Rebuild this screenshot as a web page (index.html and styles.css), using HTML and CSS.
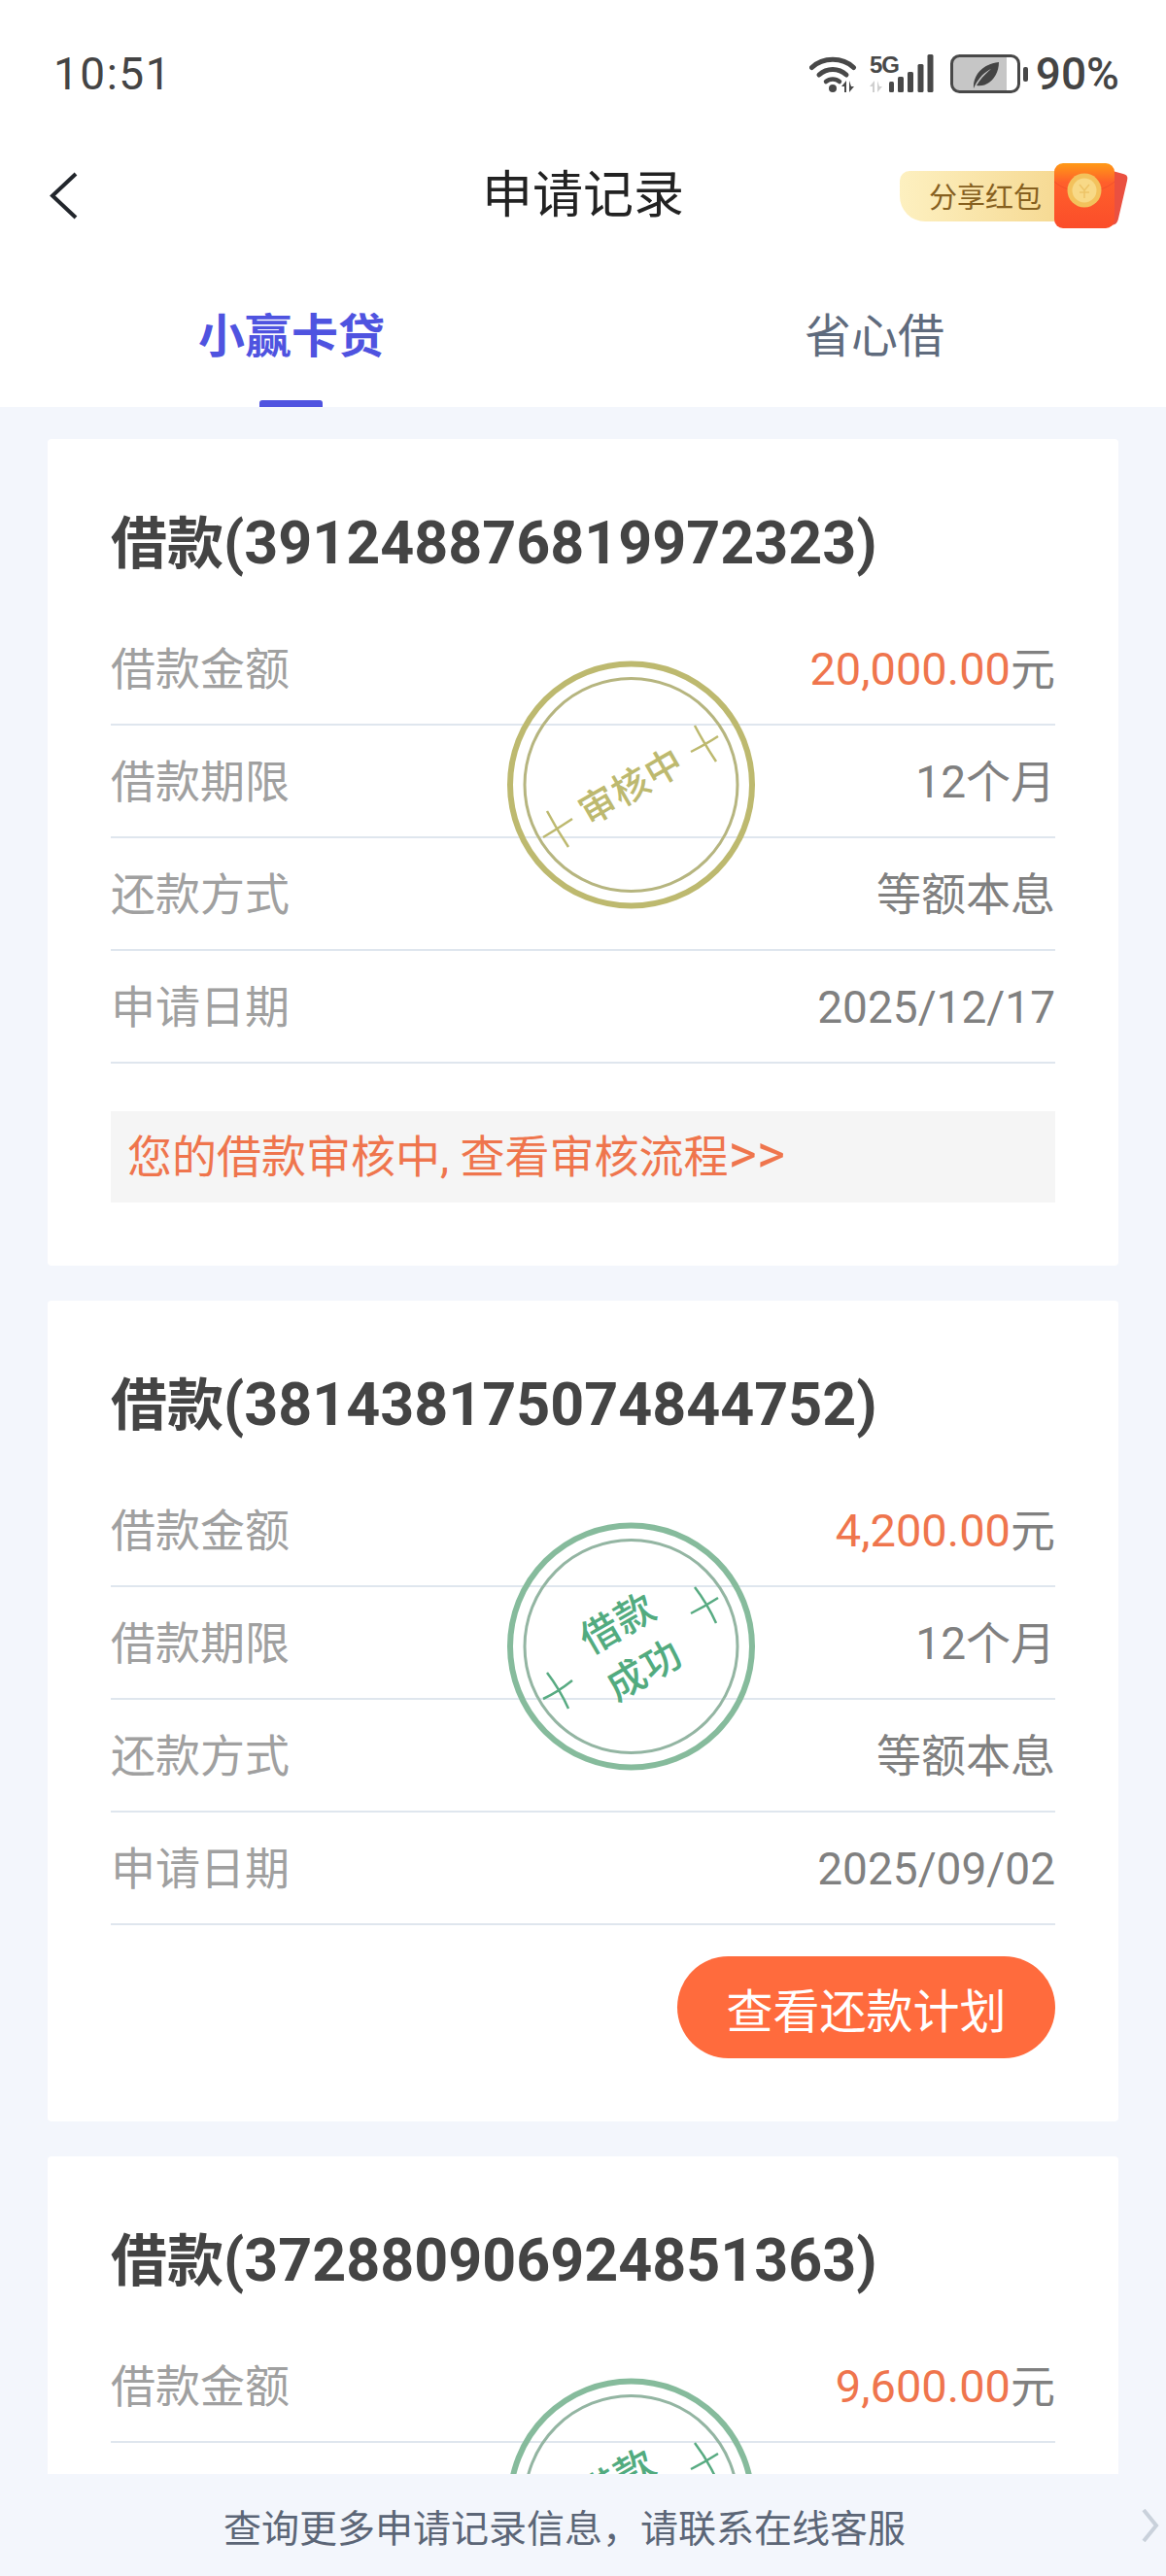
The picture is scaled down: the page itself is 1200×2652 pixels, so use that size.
FILE: index.html
```html
<!DOCTYPE html>
<html>
<head>
    <title>申请记录</title>
    <link rel="stylesheet" href="styles.css">
</head>
<body>
    <div class="page">
        <div class="status-bar">
            <span class="clock">10:51</span>
            <div class="status-icons">
                <svg class="icon-wifi" width="50" height="38" viewBox="0 0 50 38">
                    <path d="M2.5 12.5C14 1.500 34 1.500 45.500 12.500" fill="none" stroke="#484848" stroke-width="5" stroke-linecap="round"/>
                    <path d="M10 20C18 12.500 30 12.500 38 20" fill="none" stroke="#484848" stroke-width="5" stroke-linecap="round"/>
                    <path d="M17 27C21 23.500 27 23.500 31 27" fill="none" stroke="#484848" stroke-width="4.500" stroke-linecap="round"/>
                    <circle cx="24" cy="34" r="4" fill="#484848"/>
                    <path d="M38 26l-5 6h3v6h2zM41 26v12l5-6h-3z" fill="#484848"/>
                </svg>
                <svg class="icon-signal" width="66" height="48" viewBox="0 -4 66 48">
                    <text class="five-g" x="0" y="19">5G</text>
                    <path d="M5 27l-5 6h3v6h2zM8 27v12l5-6h-3z" fill="#cfcfcf"/>
                    <rect x="20" y="28" width="5" height="11" rx="1.500" fill="#484848"/>
                    <rect x="29" y="23" width="6" height="16" rx="1.500" fill="#484848"/>
                    <rect x="39" y="18" width="6" height="21" rx="1.500" fill="#484848"/>
                    <rect x="49.500" y="10" width="6" height="29" rx="1.500" fill="#484848"/>
                    <rect x="59.500" y="0" width="6" height="39" rx="1.500" fill="#484848"/>
                </svg>
                <svg class="icon-battery" width="80" height="40" viewBox="0 0 80 40">
                    <rect x="3" y="3" width="55" height="34" fill="#c6c6c6"/>
                    <rect x="1.500" y="1.500" width="69" height="37" rx="8" fill="none" stroke="#484848" stroke-width="3"/>
                    <rect x="75" y="13" width="5" height="15" rx="2" fill="#484848"/>
                    <path d="M24 35C23 22 33 10 50 8C50 22 40 34 27 32C31 25 36 20 42 15C34 19 28 26 24 35Z" fill="#444"/>
                </svg>
                <span class="battery-text">90%</span>
            </div>
        </div>

        <div class="nav-bar">
            <div class="nav-left">
                <svg width="30" height="50" viewBox="0 0 30 50">
                    <path d="M27 2L3 24.500L27 47" fill="none" stroke="#22262c" stroke-width="4"/>
                </svg>
            </div>
            <div class="nav-title">申请记录</div>
            <div class="nav-right">
                <div class="share">
                    <span class="share-text">分享红包</span>
                    <svg class="share-packet" width="76" height="70" viewBox="0 0 76 70">
                        <defs>
                            <linearGradient id="packet" x1="0" y1="0" x2="0" y2="1">
                                <stop offset="0" stop-color="#ff9a16"/>
                                <stop offset="0.3" stop-color="#ff5f2b"/>
                                <stop offset="1" stop-color="#fb4d2a"/>
                            </linearGradient>
                        </defs>
                        <path d="M60 9L71 12C75 13 76 15 75 19L66 58C65 63 62 65 58 65L56 60Z" fill="#ea5040"/>
                        <rect x="0" y="1" width="62" height="67" rx="9" fill="url(#packet)"/>
                        <path d="M0 20C16 34 46 34 62 20" fill="none" stroke="#e8432a" stroke-width="1" opacity="0.5"/>
                        <circle cx="31" cy="29" r="17.500" fill="#f3c25c"/>
                        <circle cx="31" cy="29" r="12.500" fill="#f8d987"/>
                        <path d="M26 23l5 6l5-6M31 29v8M26 31h10" fill="none" stroke="#edc468" stroke-width="1.500"/>
                    </svg>
                </div>
            </div>
        </div>

        <div class="tabs">
            <div class="tab active">小赢卡贷</div>
            <div class="tab">省心借</div>
        </div>

        <div class="list">
            <div class="card">
                <h3 class="card-title">借款<span class="loan-no">(391248876819972323)</span></h3>
                <div class="row"><span class="label">借款金额</span><span class="value"><em class="money">20,000.00</em>元</span></div>
                <div class="row"><span class="label">借款期限</span><span class="value">12个月</span></div>
                <div class="row"><span class="label">还款方式</span><span class="value">等额本息</span></div>
                <div class="row"><span class="label">申请日期</span><span class="value">2025/12/17</span></div>
                <div class="notice">您的借款审核中, 查看审核流程<span class="notice-arrows">&gt;&gt;</span></div>
                <svg class="stamp stamp-review" width="256" height="256" viewBox="0 0 256 256">
                    <circle class="ring-outer" cx="127.500" cy="128" r="124.500"/>
                    <circle class="ring-inner" cx="127.500" cy="128" r="109.500"/>
                    <path class="cross" d="M189 94Q203 87 217 78M193 67Q203 86 215 104M37 182Q52 173 67 163M41 155Q51 174 63 192"/>
                    <text class="stamp-text" x="128" y="143" transform="rotate(-30 128 130)">审核中</text>
                </svg>
            </div>

            <div class="card">
                <h3 class="card-title">借款<span class="loan-no">(381438175074844752)</span></h3>
                <div class="row"><span class="label">借款金额</span><span class="value"><em class="money">4,200.00</em>元</span></div>
                <div class="row"><span class="label">借款期限</span><span class="value">12个月</span></div>
                <div class="row"><span class="label">还款方式</span><span class="value">等额本息</span></div>
                <div class="row"><span class="label">申请日期</span><span class="value">2025/09/02</span></div>
                <div class="actions"><button class="plan-btn">查看还款计划</button></div>
                <svg class="stamp stamp-done" width="256" height="256" viewBox="0 0 256 256">
                    <circle class="ring-outer" cx="127.500" cy="128" r="124.500"/>
                    <circle class="ring-inner" cx="127.500" cy="128" r="109.500"/>
                    <path class="cross" d="M189 94Q203 87 217 78M193 67Q206 84 215 104M37 182Q52 175 67 163M41 155Q54 172 63 192"/>
                    <text class="stamp-text" x="115" y="118" transform="rotate(-30 115 106)">借款</text>
                    <text class="stamp-text" x="142" y="166" transform="rotate(-30 142 154)">成功</text>
                </svg>
            </div>

            <div class="card">
                <h3 class="card-title">借款<span class="loan-no">(372880906924851363)</span></h3>
                <div class="row"><span class="label">借款金额</span><span class="value"><em class="money">9,600.00</em>元</span></div>
                <svg class="stamp stamp-done" width="256" height="256" viewBox="0 0 256 256">
                    <circle class="ring-outer" cx="127.500" cy="128" r="124.500"/>
                    <circle class="ring-inner" cx="127.500" cy="128" r="109.500"/>
                    <path class="cross" d="M189 94Q203 87 217 78M193 67Q206 84 215 104M37 182Q52 175 67 163M41 155Q54 172 63 192"/>
                    <text class="stamp-text" x="115" y="118" transform="rotate(-30 115 106)">借款</text>
                </svg>
            </div>
        </div>

        <div class="footer">
            <span class="footer-text">查询更多申请记录信息，请联系在线客服</span>
            <svg width="18" height="34" viewBox="0 0 18 34">
                <path d="M2 1L15 17L2 33" fill="none" stroke="#c9d1db" stroke-width="4"/>
            </svg>
        </div>
    </div>
</body>
</html>
```

FILE: styles.css
```css
* {
    box-sizing: border-box;
}
html, body {
    margin: 0;
    padding: 0;
}
body {
    font-family: Roboto, "Noto Sans CJK SC", sans-serif;
    background-color: #f3f6fc;
}
.page {
    width: 1200px;
    height: 2652px;
    display: flex;
    flex-direction: column;
    overflow: hidden;
}

/* status bar */
.status-bar {
    height: 152px;
    background: #fff;
    display: flex;
    justify-content: space-between;
    align-items: center;
    padding: 0 48px 0 55px;
    color: #444;
}
.clock {
    font-size: 46px;
    letter-spacing: 1.5px;
}
.status-icons {
    display: flex;
    align-items: center;
    gap: 12px;
}
.five-g {
    font-family: "Liberation Sans", sans-serif;
    font-size: 24px;
    font-weight: bold;
    fill: #484848;
    letter-spacing: -1px;
}
.icon-battery {
    margin-left: 5px;
}
.battery-text {
    font-size: 46px;
    font-weight: 500;
    margin-left: -4px;
}

/* nav */
.nav-bar {
    height: 100px;
    background: #fff;
    display: grid;
    grid-template-columns: 1fr auto 1fr;
    align-items: center;
}
.nav-left {
    padding-left: 51px;
    display: flex;
}
.nav-title {
    font-size: 52px;
    line-height: 64px;
    color: #222;
}
.nav-right {
    display: flex;
    justify-content: flex-end;
    padding-right: 39px;
}
.share {
    display: flex;
    align-items: center;
}
.share-text {
    width: 160px;
    height: 52px;
    line-height: 56px;
    padding-left: 30px;
    font-size: 29px;
    color: #86601f;
    background: linear-gradient(90deg, #fdf0c0, #f6da94);
    border-radius: 10px 0 0 26px;
}
.share-packet {
    margin-left: -1px;
}

/* tabs */
.tabs {
    height: 167px;
    background: #fff;
    display: grid;
    grid-template-columns: 1fr 1fr;
}
.tab {
    position: relative;
    text-align: center;
    padding-top: 65px;
    font-size: 48px;
    line-height: 60px;
    color: #5f6b7d;
}
.tab.active {
    color: #4f53e0;
    font-weight: bold;
}
.tab.active::after {
    content: "";
    position: absolute;
    left: 50%;
    bottom: 0;
    width: 65px;
    height: 7px;
    margin-left: -33px;
    border-radius: 3px 3px 0 0;
    background: #4f53e0;
}

/* cards */
.list {
    flex: 1;
    min-height: 0;
    overflow: hidden;
    padding: 33px 49px 0 49px;
}
.card {
    position: relative;
    background: #fff;
    border-radius: 4px;
    padding: 71px 65px 65px;
    margin-bottom: 36px;
}
.card-title {
    margin: 0 0 36px;
    height: 72px;
    line-height: 72px;
    font-size: 58px;
    font-weight: bold;
    color: #444;
}
.loan-no {
    font-size: 61px;
}
.row {
    height: 116px;
    padding-top: 2px;
    border-bottom: 2px solid #dfe6ee;
    display: flex;
    justify-content: space-between;
    align-items: center;
    font-size: 46px;
    line-height: 60px;
}
.label {
    color: #a0a0a0;
}
.value {
    color: #808080;
}
.money {
    font-style: normal;
    font-size: 47px;
    color: #ef754d;
}
.notice {
    margin-top: 49px;
    height: 94px;
    line-height: 94px;
    padding-left: 17px;
    background: #f5f5f5;
    font-size: 46px;
    color: #ef754d;
}
.notice-arrows {
    font-size: 56px;
    line-height: 1;
}
.actions {
    margin-top: 32px;
    display: flex;
    justify-content: flex-end;
}
.plan-btn {
    width: 389px;
    height: 105px;
    border: none;
    border-radius: 53px;
    background: #ff6b3d;
    color: #fff;
    font-family: inherit;
    font-size: 48px;
}

/* stamps */
.stamp {
    position: absolute;
    left: 473px;
    top: 228px;
}
.ring-outer, .ring-inner, .cross {
    fill: none;
}
.ring-outer {
    stroke-width: 6;
}
.ring-inner {
    stroke-width: 3;
}
.cross {
    stroke-width: 2.500;
}
.stamp-text {
    font-family: "Noto Sans CJK SC", sans-serif;
    font-size: 38px;
    font-weight: 500;
    text-anchor: middle;
    letter-spacing: 1px;
}
.stamp-review .ring-outer {
    stroke: #bdb96f;
}
.stamp-review .ring-inner {
    stroke: #b6b57f;
}
.stamp-review .cross {
    stroke: #bdb96f;
}
.stamp-review .stamp-text {
    fill: #bdb96f;
}
.stamp-done .ring-outer {
    stroke: #86bb9c;
}
.stamp-done .ring-inner {
    stroke: #93b5a2;
}
.stamp-done .cross {
    stroke: #58ab82;
}
.stamp-done .stamp-text {
    fill: #52ab7f;
    font-size: 40px;
}

/* footer */
.footer {
    height: 105px;
    flex-shrink: 0;
    background: #f3f6fc;
    display: flex;
    justify-content: space-between;
    align-items: center;
    padding: 0 7px 0 230px;
}
.footer-text {
    font-size: 39px;
    color: #5c6677;
}
```
